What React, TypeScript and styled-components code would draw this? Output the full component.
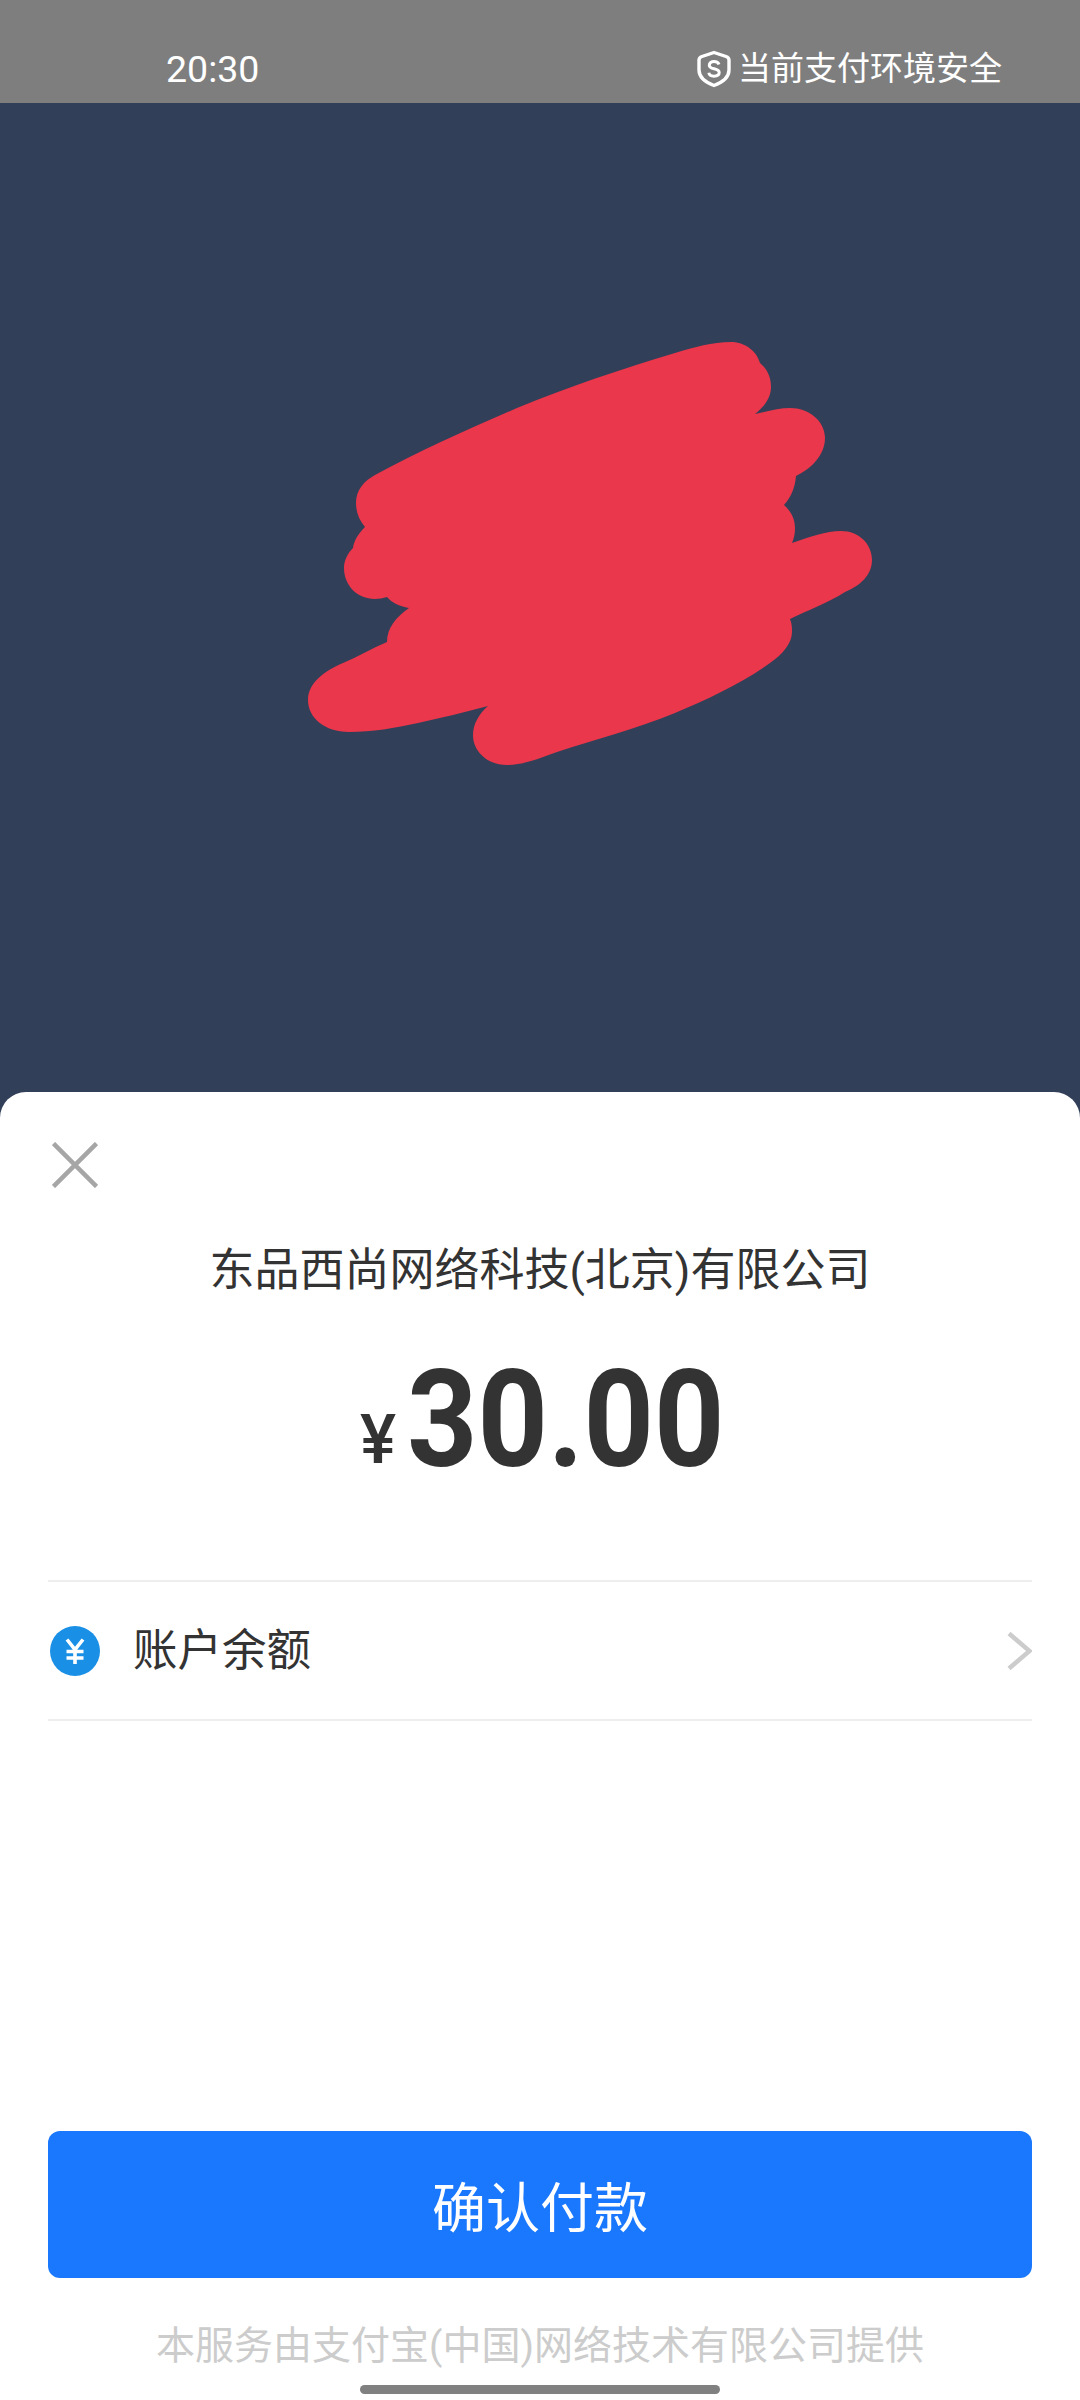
import { createGlobalStyle } from "styled-components";
import styled from "styled-components";

const GlobalStyle = createGlobalStyle`
  html, body {
    margin: 0;
    padding: 0;
    background: #323f58;
    font-family: "Roboto", "Noto Sans CJK SC", sans-serif;
  }
`;

const Page = styled.div`
  width: 1080px;
  height: 2400px;
  display: flex;
  flex-direction: column;
  overflow: hidden;
  background: #323f58;
`;
const StatusBar = styled.div`
  height: 103px;
  flex-shrink: 0;
  display: flex;
  align-items: center;
  justify-content: space-between;
  padding: 34px 78px 0 166px;
  box-sizing: border-box;
  background: #7e7e7e;
  color: #fff;
`;
const Clock = styled.span`
  font-size: 37.5px;
  line-height: 44px;
`;
const SafeNote = styled.div`
  display: flex;
  align-items: center;
  gap: 7px;
  font-size: 33px;
  line-height: 40px;
`;
const Hero = styled.div`
  height: 989px;
  flex-shrink: 0;
  padding: 227px 0 0 300px;
  box-sizing: border-box;
`;
const Sheet = styled.div`
  flex: 1;
  display: flex;
  flex-direction: column;
  padding: 0 48px;
  background: #fff;
  border-radius: 26px 26px 0 0;
`;
const CloseButton = styled.button`
  align-self: flex-start;
  display: flex;
  width: 46px;
  height: 46px;
  margin: 50px 0 0 4px;
  padding: 0;
  border: 0;
  background: none;
`;
const Merchant = styled.h1`
  margin: 51px 0 0;
  text-align: center;
  font-size: 45px;
  line-height: 64px;
  font-weight: 400;
  color: #333;
`;
const Amount = styled.div`
  display: flex;
  align-items: flex-end;
  justify-content: center;
  margin: 42px 0 0 6px;
  color: #333;
`;
const Currency = styled.span`
  font-size: 68px;
  line-height: 68px;
  font-weight: 500;
  margin: 0 11px 21px 0;
`;
// digits in the reference are narrower than Roboto's, so squeeze them a little
const Figure = styled.span`
  display: inline-block;
  font-size: 135px;
  line-height: 150px;
  font-weight: 700;
  transform: scaleX(0.91);
  transform-origin: left center;
  margin-right: -30px;
`;
const PayRow = styled.div`
  display: flex;
  align-items: center;
  height: 137px;
  margin-top: 85px;
  border-top: 2px solid #eee;
  border-bottom: 2px solid #eee;
`;
const PayIcon = styled.svg`
  width: 50px;
  height: 50px;
  flex-shrink: 0;
  margin: 0 33px 0 2px;
`;
const PayLabel = styled.span`
  flex: 1;
  font-size: 44.5px;
  line-height: 60px;
  color: #333;
`;
const Spacer = styled.div`
  flex: 1;
`;
const ConfirmButton = styled.button`
  height: 147px;
  flex-shrink: 0;
  border: 0;
  border-radius: 12px;
  background: #1a78ff;
  color: #fff;
  font-family: inherit;
  font-size: 54px;
`;
const Footnote = styled.div`
  margin-top: 43px;
  text-align: center;
  font-size: 39px;
  line-height: 50px;
  color: #ccc;
`;
const HomeBar = styled.div`
  width: 360px;
  height: 9px;
  margin: 14px auto 6px;
  border-radius: 5px;
  background: #808080;
`;

function App() {
  return (
    <Page>
      <GlobalStyle />
      <StatusBar>
        <Clock>20:30</Clock>
        <SafeNote>
          <svg width="34" height="38" viewBox="0 0 34 38" fill="none">
            <path d="M17 2.5L29 6.5C31 7.2 32 8 32 10V20C32 27 25 32.5 17 35.5C9 32.5 2 27 2 20V10C2 8 3 7.2 5 6.5Z" stroke="#fff" strokeWidth="3.4" strokeLinejoin="round" />
            <path d="M22 14.5C21.3 12.5 19.5 11.6 17 11.6C14.3 11.6 12.3 13 12.3 15.2C12.3 20 22.2 17.6 22.2 22.6C22.2 24.9 20 26.2 17 26.2C14.2 26.2 12.2 25 11.8 22.8" stroke="#fff" strokeWidth="3" />
          </svg>
          当前支付环境安全
        </SafeNote>
      </StatusBar>
      <Hero>
        {/* red scribble hiding the merchant logo */}
        <svg width="580" height="440" viewBox="300 330 580 440">
          <path
            fill="#ea374b"
            d="M731 342C746 342 757 352 760 363C768 370 771 378 771 387C771 398 764 407 755 414C768 411 780 408 790 408C809 408 825 421 825 438C825 455 811 469 796 476C795 488 791 497 784 505C791 511 795 519 795 528C795 534 794 538 792 543C810 537 826 531 841 531C859 531 872 544 872 560C872 575 860 586 845 592C828 603 808 610 790 619C792 624 792 628 792 632C792 643 783 654 770 663C742 683 708 699 675 713C636 729 596 739 557 752C540 758 524 765 507 765C487 765 473 751 473 735C473 724 479 714 488 706C465 712 441 718 418 723C395 728 372 732 349 732C325 732 308 718 308 700C308 683 324 671 343 663C358 657 372 648 387 642C387 628 396 617 409 608C399 606 392 603 387 597C383 598 379 599 375 599C357 599 344 585 344 568C344 560 348 553 353 548C354 540 359 533 365 527C359 520 356 512 356 503C356 490 364 481 375 475C421 450 469 429 517 408C570 386 622 369 675 353C695 347 712 342 731 342Z"
          />
        </svg>
      </Hero>
      <Sheet>
        <CloseButton aria-label="关闭">
          <svg width="46" height="46" viewBox="0 0 46 46">
            <path d="M1.5 1.5L44.5 44.5M44.5 1.5L1.5 44.5" stroke="#a6a6a6" strokeWidth="4.5" />
          </svg>
        </CloseButton>
        <Merchant>东品西尚网络科技(北京)有限公司</Merchant>
        <Amount>
          <Currency>¥</Currency>
          <Figure>30.00</Figure>
        </Amount>
        <PayRow>
          <PayIcon viewBox="0 0 50 50">
            <circle cx="25" cy="25" r="25" fill="#1a8fe6" />
            <path d="M17 13.5L25 23.5L33 13.5M16.5 25.5H33.5M16.5 32H33.5M25 23.5V38" fill="none" stroke="#fff" strokeWidth="3.6" />
          </PayIcon>
          <PayLabel>账户余额</PayLabel>
          <svg width="26" height="40" viewBox="0 0 26 40" fill="none">
            <path d="M3 2.5L23.5 20L3 37.5" stroke="#ccc" strokeWidth="4.5" />
          </svg>
        </PayRow>
        <Spacer />
        <ConfirmButton>确认付款</ConfirmButton>
        <Footnote>本服务由支付宝(中国)网络技术有限公司提供</Footnote>
        <HomeBar />
      </Sheet>
    </Page>
  );
}

export default App;
